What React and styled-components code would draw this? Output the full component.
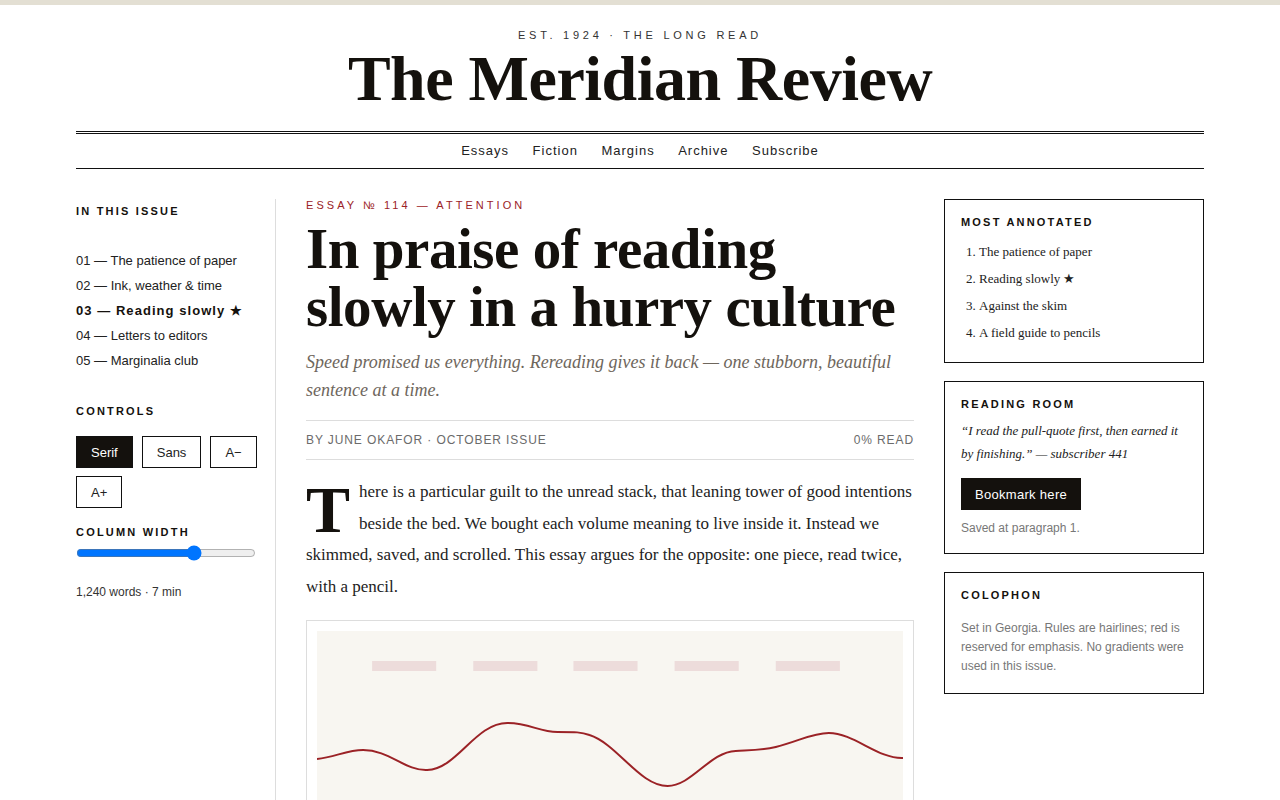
import React from "react";
import styled, { createGlobalStyle } from "styled-components";

const serif = `Georgia, "Liberation Serif", "Times New Roman", serif`;
const sans = `"Liberation Sans", Arial, Helvetica, sans-serif`;
const ink = "#14110d";
const red = "#9b2226";

const Global = createGlobalStyle`
  * { box-sizing: border-box; }
  html, body { margin: 0; padding: 0; background: #fff; }
  body { font-family: ${serif}; color: ${ink}; }
`;

const TopStripe = styled.div`
  height: 5px;
  background: #e3dfd3;
`;

const Page = styled.div`
  max-width: 1128px;
  margin: 0 auto;
`;

const Masthead = styled.header`
  text-align: center;
  padding-top: 23px;
`;

const Kicker = styled.div`
  font-family: ${sans};
  font-size: 11px;
  letter-spacing: 3.75px;
  color: #333;
  line-height: 14px;
`;

const Title = styled.h1`
  margin: 5px 0 0;
  font-family: ${serif};
  font-size: 64px;
  font-weight: 700;
  letter-spacing: -0.5px;
  line-height: 64px;
  color: ${ink};
`;

const Nav = styled.nav`
  margin-top: 20px;
  border-top: 3px double #111;
  border-bottom: 1px solid #111;
  display: flex;
  justify-content: center;
  gap: 23.5px;
  padding: 8px 0 8px;
`;

const NavLink = styled.a`
  font-family: ${sans};
  font-size: 13px;
  letter-spacing: 1px;
  color: #222;
  text-decoration: none;
  line-height: 18px;
`;

const Columns = styled.div`
  display: grid;
  grid-template-columns: 200px 1fr 260px;
  column-gap: 30px;
  margin-top: 30px;
`;

const Sidebar = styled.aside`
  border-right: 1px solid #ddd;
  padding-top: 6px;
  min-height: 700px;
`;

const Label = styled.h4`
  margin: 0;
  font-family: ${sans};
  font-size: 11px;
  font-weight: 700;
  letter-spacing: 2.2px;
  text-transform: uppercase;
  color: ${ink};
  line-height: 13px;
`;

const IssueList = styled.ul`
  list-style: none;
  margin: 30px 0 0;
  padding: 0;
`;

const IssueItem = styled.li`
  font-family: ${sans};
  font-size: 13px;
  line-height: 25px;
  font-weight: ${(p) => (p.$active ? 700 : 400)};
  letter-spacing: ${(p) => (p.$active ? "1.05px" : "0")};
  color: ${(p) => (p.$active ? ink : "#222")};
`;

const Section = styled.div`
  margin-top: ${(p) => p.$top || 0}px;
`;

const ButtonRow = styled.div`
  display: flex;
  flex-wrap: wrap;
  gap: 8px 9px;
  margin-top: 18px;
  width: 190px;
`;

const ToggleButton = styled.button`
  height: 32px;
  padding: 0 14px;
  font-family: ${sans};
  font-size: 13px;
  border: 1px solid #111;
  background: ${(p) => (p.$on ? ink : "#fff")};
  color: ${(p) => (p.$on ? "#fff" : "#222")};
  cursor: pointer;
`;

const Range = styled.input`
  display: block;
  width: 180px;
  margin: 6px 0 0;
`;

const Meta = styled.div`
  font-family: ${sans};
  font-size: 12px;
  color: #333;
  margin-top: 24px;
`;

const Article = styled.article`
  min-width: 0;
`;

const Eyebrow = styled.div`
  font-family: ${sans};
  font-size: 11px;
  letter-spacing: 3.05px;
  color: ${red};
  line-height: 13px;
`;

const Headline = styled.h2`
  margin: 8px 0 0;
  font-family: ${serif};
  font-size: 57px;
  font-weight: 700;
  line-height: 58px;
  letter-spacing: -0.45px;
  color: ${ink};
`;

const Dek = styled.p`
  margin: 12px 0 0;
  font-family: ${serif};
  font-style: italic;
  font-size: 18px;
  line-height: 28px;
  color: #6e665c;
`;

const Byline = styled.div`
  margin-top: 16px;
  border-top: 1px solid #ddd;
  border-bottom: 1px solid #ddd;
  display: flex;
  justify-content: space-between;
  align-items: center;
  height: 40px;
  font-family: ${sans};
  font-size: 12px;
  letter-spacing: 0.9px;
  color: #6b6b6b;
  text-transform: uppercase;
`;

const Body = styled.p`
  margin: 16px 0 0;
  font-family: ${serif};
  font-size: 17px;
  line-height: 31.5px;
  color: #222;
`;

const DropCap = styled.span`
  float: left;
  font-family: ${serif};
  font-size: 66px;
  font-weight: 700;
  line-height: 52px;
  margin: 8px 9px 0 0;
  color: ${ink};
`;

const Figure = styled.figure`
  margin: 18px 0 0;
  border: 1px solid #ddd;
  padding: 10px;
`;

const Plate = styled.div`
  background: #f8f6f1;
  height: 260px;
`;

const Rail = styled.aside`
  display: flex;
  flex-direction: column;
  gap: 18px;
`;

const Card = styled.section`
  border: 1px solid #111;
  padding: 16px 16px ${(p) => p.$pb ?? 16}px;
`;

const RankList = styled.ol`
  margin: 9px 0 0;
  padding-left: 18px;
  font-family: ${serif};
  font-size: 13px;
  line-height: 27px;
  color: #222;
`;

const Quote = styled.p`
  margin: 8px 0 0;
  font-family: ${serif};
  font-style: italic;
  font-size: 13px;
  line-height: 23px;
  color: #222;
`;

const DarkButton = styled.button`
  margin-top: 13px;
  height: 32px;
  padding: 0 14px;
  border: 0;
  background: ${ink};
  color: #fff;
  font-family: ${sans};
  font-size: 13px;
  letter-spacing: 0.3px;
`;

const Note = styled.p`
  margin: ${(p) => p.$top || 0}px 0 0;
  font-family: ${sans};
  font-size: 12px;
  line-height: 19px;
  color: #777;
`;

const issues = [
  "01 — The patience of paper",
  "02 — Ink, weather & time",
  "03 — Reading slowly ★",
  "04 — Letters to editors",
  "05 — Marginalia club",
];

function Wave() {
  const dashes = [55, 156, 256, 357, 458];
  return (
    <svg width="100%" height="260" viewBox="0 0 585 260" preserveAspectRatio="none">
      {dashes.map((x) => (
        <rect key={x} x={x} y="30" width="64" height="10" fill="#eddcdb" />
      ))}
      <path
        d="M0 128 C18 126 30 119 46 119 C72 119 88 140 110 139 C140 138 158 92 190 92 C212 92 222 101 240 101 C258 101 264 101 272 104 C300 113 322 155 350 155 C374 155 392 121 418 120 C436 119 446 119 458 116 C482 110 494 102 511 102 C536 102 560 128 585 127"
        fill="none"
        stroke={red}
        strokeWidth="2"
      />
    </svg>
  );
}

export default function App() {
  return (
    <>
      <Global />
      <TopStripe />
      <Page>
        <Masthead>
          <Kicker>EST. 1924 · THE LONG READ</Kicker>
          <Title>The Meridian Review</Title>
          <Nav>
            {["Essays", "Fiction", "Margins", "Archive", "Subscribe"].map((n) => (
              <NavLink key={n} href="#">{n}</NavLink>
            ))}
          </Nav>
        </Masthead>

        <Columns>
          <Sidebar>
            <Label>In this issue</Label>
            <IssueList>
              {issues.map((t, i) => (
                <IssueItem key={t} $active={i === 2}>{t}</IssueItem>
              ))}
            </IssueList>
            <Section $top={32}>
              <Label>Controls</Label>
              <ButtonRow>
                <ToggleButton $on>Serif</ToggleButton>
                <ToggleButton>Sans</ToggleButton>
                <ToggleButton>A−</ToggleButton>
                <ToggleButton>A+</ToggleButton>
              </ButtonRow>
            </Section>
            <Section $top={18}>
              <Label>Column width</Label>
              <Range type="range" min="0" max="100" defaultValue="67" />
            </Section>
            <Meta>1,240 words · 7 min</Meta>
          </Sidebar>

          <Article>
            <Eyebrow>ESSAY № 114 — ATTENTION</Eyebrow>
            <Headline>In praise of reading slowly in a hurry culture</Headline>
            <Dek>
              Speed promised us everything. Rereading gives it back — one stubborn, beautiful sentence at a time.
            </Dek>
            <Byline>
              <span>By June Okafor · October issue</span>
              <span>0% read</span>
            </Byline>
            <Body>
              <DropCap>T</DropCap>
              here is a particular guilt to the unread stack, that leaning tower of good intentions beside the bed. We
              bought each volume meaning to live inside it. Instead we skimmed, saved, and scrolled. This essay argues
              for the opposite: one piece, read twice, with a pencil.
            </Body>
            <Figure>
              <Plate>
                <Wave />
              </Plate>
            </Figure>
          </Article>

          <Rail>
            <Card>
              <Label>Most annotated</Label>
              <RankList>
                <li>The patience of paper</li>
                <li>Reading slowly ★</li>
                <li>Against the skim</li>
                <li>A field guide to pencils</li>
              </RankList>
            </Card>
            <Card $pb={15}>
              <Label>Reading room</Label>
              <Quote>“I read the pull-quote first, then earned it by finishing.” — subscriber 441</Quote>
              <DarkButton>Bookmark here</DarkButton>
              <Note $top={9}>Saved at paragraph 1.</Note>
            </Card>
            <Card $pb={17}>
              <Label>Colophon</Label>
              <Note $top={17}>
                Set in Georgia. Rules are hairlines; red is reserved for emphasis. No gradients were used in this issue.
              </Note>
            </Card>
          </Rail>
        </Columns>
      </Page>
    </>
  );
}
